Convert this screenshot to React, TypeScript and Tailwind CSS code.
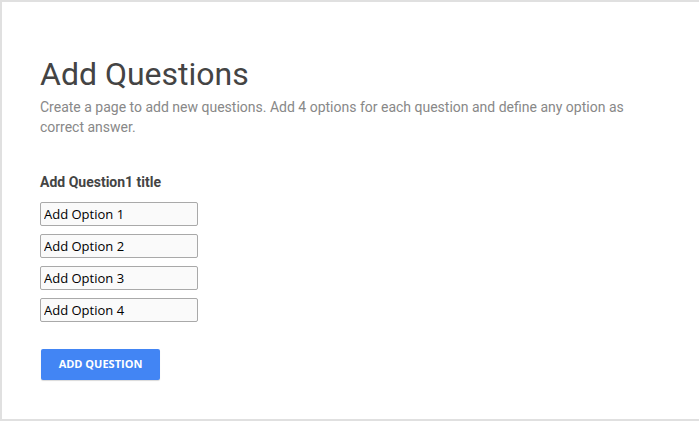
import React from 'react';

const options = ['Add Option 1', 'Add Option 2', 'Add Option 3', 'Add Option 4'];

export default function App() {
  return (
    <div className="h-[423px] w-[699px] bg-white overflow-hidden">
      <div className="h-[421px] w-[720px] border-2 border-r-0 border-[#e0e0e0] bg-white pl-[38px] pt-[52px] font-['Roboto',sans-serif]">
        <h1 className="text-[32px] leading-[40px] text-[#444]">Add Questions</h1>
        <p className="mt-[3px] w-[600px] text-[14px] leading-[20px] text-[#888]">
          Create a page to add new questions. Add 4 options for each question and define any option as correct answer.
        </p>
        <h2 className="mt-[35px] text-[14px] font-bold leading-[20px] text-[#444]">Add Question1 title</h2>
        <div className="mt-[10px] flex flex-col gap-[8px]">
          {options.map(o => (
            <input
              key={o}
              type="text"
              defaultValue={o}
              className="h-[24px] w-[158px] rounded-[2px] border border-[#a9a9a9] bg-[#fafafa] px-[3px] font-['Open_Sans',sans-serif] text-[13px] text-black outline-none"
            />
          ))}
        </div>
        <button className="mt-[27px] ml-[1px] h-[31px] w-[119px] rounded-[2px] bg-[#4285f4] font-['Open_Sans',sans-serif] text-[11px] font-bold text-white shadow-[0_1px_1px_rgba(0,0,0,0.15)]">
          ADD QUESTION
        </button>
      </div>
    </div>
  );
}
